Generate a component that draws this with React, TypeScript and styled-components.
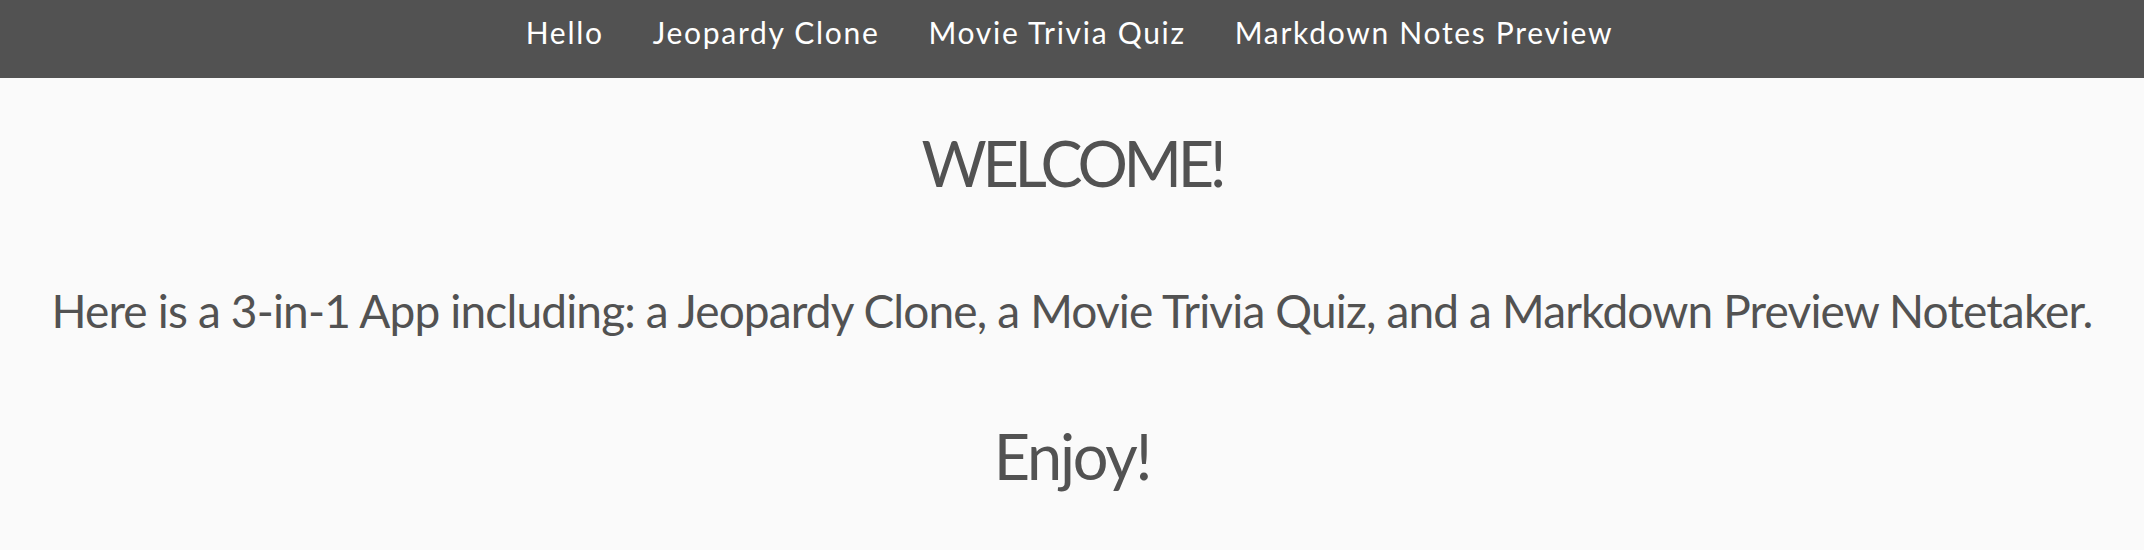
import React from "react";
import styled, { createGlobalStyle } from "styled-components";

const GlobalStyle = createGlobalStyle`
  html, body {
    margin: 0;
    padding: 0;
    background: #fafafa;
  }
  body {
    font-family: Lato, "Noto Sans", "Open Sans", sans-serif;
    color: #525252;
  }
`;

const NavBar = styled.nav`
  height: 78px;
  background: #525252;
  display: flex;
  justify-content: center;
  align-items: flex-start;
  gap: 49px;
  box-sizing: border-box;
  padding: 14px 5px 0 0;
`;

const NavLink = styled.a`
  color: #ffffff;
  text-decoration: none;
  font-size: 30px;
  line-height: 36px;
  font-weight: 400;
  letter-spacing: 1.7px;
  white-space: nowrap;
  cursor: pointer;
`;

const Main = styled.main`
  display: flex;
  flex-direction: column;
  align-items: center;
  text-align: center;
`;

const Heading = styled.h1<{ $top: number; $tracking: number }>`
  margin: ${(p) => p.$top}px 0 0;
  font-size: 63px;
  line-height: 1.2;
  font-weight: 400;
  letter-spacing: ${(p) => p.$tracking}px;
`;

const Lead = styled.p`
  margin: 82px 0 0;
  font-size: 46px;
  line-height: 1.2;
  font-weight: 400;
  letter-spacing: -0.85px;
  white-space: nowrap;
`;

const links = ["Hello", "Jeopardy Clone", "Movie Trivia Quiz", "Markdown Notes Preview"];

export default function App() {
  return (
    <>
      <GlobalStyle />
      <NavBar>
        {links.map((l) => (
          <NavLink key={l}>{l}</NavLink>
        ))}
      </NavBar>
      <Main>
        <Heading $top={47} $tracking={-4.3}>WELCOME!</Heading>
        <Lead>
          Here is a 3-in-1 App including: a Jeopardy Clone, a Movie Trivia Quiz, and a Markdown Preview Notetaker.
        </Lead>
        <Heading $top={80} $tracking={-2.2}>Enjoy!</Heading>
      </Main>
    </>
  );
}
